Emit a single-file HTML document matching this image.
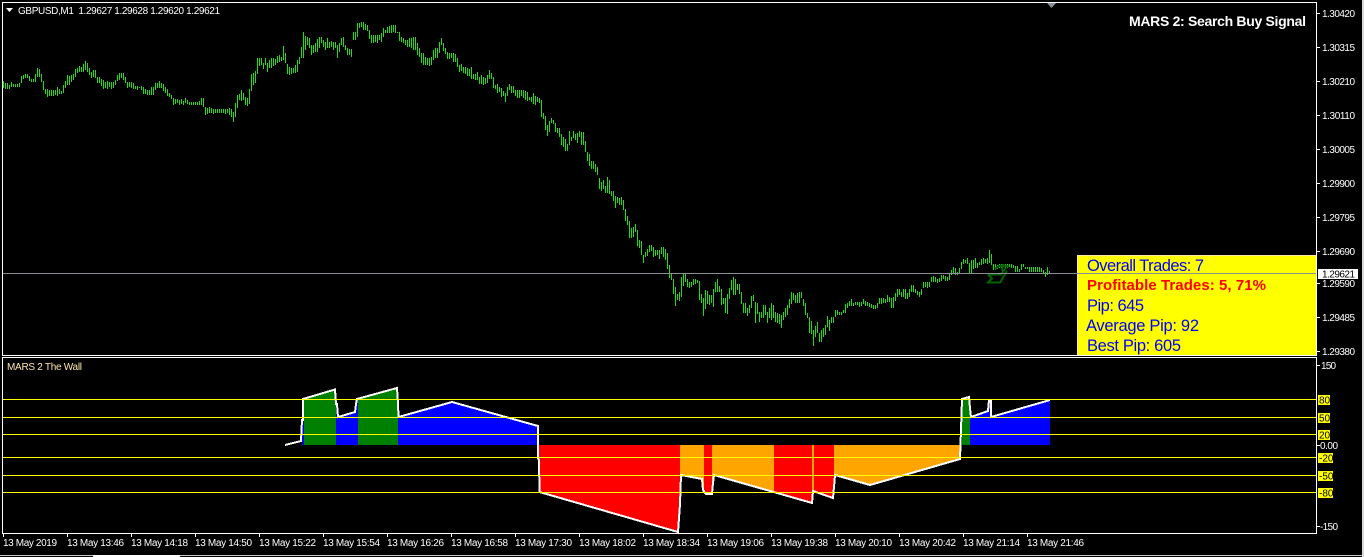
<!DOCTYPE html>
<html lang="en">
<head>
<meta charset="utf-8">
<title>GBPUSD,M1 MARS 2</title>
<style>
html,body{margin:0;padding:0;background:#000;width:1364px;height:557px;overflow:hidden}
svg{display:block;position:absolute;left:0;top:0}
text{font-family:"Liberation Sans",Arial,sans-serif;fill:#fff}
.a{font-size:10px}
.k{font-size:10px;fill:#000}
.p{font-size:16.5px;fill:#0000ff}
</style>
</head>
<body>
<svg width="1364" height="557" viewBox="0 0 1364 557" xmlns="http://www.w3.org/2000/svg">
<defs>
<clipPath id="area"><polygon points="285,445 301,441 302,420 303,420 303,399 335,389.5 336,404 337,404 338,417 355,412 356,404 357,399 397,388 398,403 398.5,417 452,402 538,426 538,445 539,445 539,460 539.5,492 678,532 680,504 681,475 702,479 703,490 706,494 712,494 713,483 714,475 812,503 813,491 833,498 834,487 835,475 870,485 960,459 961,445 962,445 962,399 969,397 970,408 971,417 988,411 989,400 991,400 991,417 1050,400 1050,445"/></clipPath>
</defs>
<rect width="1364" height="557" fill="#000"/>

<!-- price bars -->
<path transform="translate(.5 0)" fill="none" stroke="#22dd11" stroke-width="1" shape-rendering="crispEdges" d="M3 81V88M5 83V89M7 83V89M9 85V89M11 82V87M13 84V87M15 84V87M17 84V87M19 83V87M21 76V83M23 75V79M25 74V78M27 74V78M29 76V81M31 79V82M33 79V82M35 74V82M37 68V77M39 69V77M41 74V82M43 81V90M45 89V94M47 89V97M49 90V96M51 90V96M53 90V96M55 90V95M57 87V96M59 89V94M61 91V94M63 85V93M65 81V88M67 75V85M69 76V85M71 75V82M73 74V80M75 69V77M77 68V73M79 66V72M81 67V72M83 64V72M85 61V70M87 63V72M89 68V75M91 72V78M93 70V77M95 70V78M97 77V83M99 77V83M101 79V86M103 80V89M105 82V88M107 81V89M109 82V87M111 82V89M113 82V88M115 80V85M117 75V81M119 73V80M121 73V78M123 73V80M125 77V83M127 82V88M129 82V87M131 82V88M133 83V89M135 86V89M137 86V90M139 87V88M141 86V90M143 87V94M145 89V94M147 90V95M149 90V95M151 87V95M153 87V95M155 83V90M157 83V88M159 81V88M161 83V88M163 84V91M165 87V93M167 89V96M169 93V97M171 95V99M173 98V105M175 99V104M177 99V103M179 100V105M181 99V104M183 101V105M185 98V103M187 100V104M189 102V105M191 102V105M193 102V105M195 102V105M197 102V105M199 101V105M201 98V105M203 98V107M205 107V115M207 108V114M209 107V113M211 108V113M213 109V114M215 109V113M217 109V113M219 109V113M221 109V113M223 109V113M225 109V114M227 109V113M229 108V115M231 109V117M233 112V122M235 103V117M237 95V108M239 94V100M241 90V101M243 93V100M245 97V105M247 98V106M249 89V104M251 74V91M253 73V85M255 71V83M257 58V74M259 58V66M261 58V65M263 63V69M265 58V65M267 63V72M269 60V68M271 58V68M273 58V66M275 59V65M277 56V63M279 55V62M281 57V61M283 46V60M285 53V63M287 64V74M289 67V75M291 68V74M293 68V73M295 65V73M297 60V72M299 57V64M301 47V58M303 32V58M305 36V50M307 37V45M309 38V48M311 45V55M313 45V53M315 43V52M317 39V52M319 37V48M321 37V43M323 40V47M325 42V50M327 38V48M329 42V48M331 41V47M333 42V50M335 42V48M337 45V58M339 43V52M341 38V45M343 37V47M345 45V50M347 48V55M349 49V55M351 49V57M353 32V40M355 32V40M357 23V37M359 23V28M361 22V27M363 22V30M365 24V30M367 25V31M369 30V39M371 35V43M373 35V43M375 35V42M377 35V43M379 35V40M381 33V42M383 28V37M385 30V33M387 27V33M389 26V33M391 25V33M393 25V32M395 25V33M397 32V33M399 32V41M401 37V42M403 38V43M405 40V45M407 40V47M409 38V47M411 38V48M413 37V50M415 37V50M417 43V55M419 48V57M421 53V63M423 53V65M425 57V65M427 58V65M429 58V66M431 57V65M433 50V60M435 48V58M437 48V58M439 42V53M441 38V45M443 43V51M445 48V54M447 52V59M449 53V59M451 53V58M453 53V62M455 54V62M457 58V67M459 65V72M461 64V71M463 67V73M465 67V74M467 68V76M469 69V76M471 67V79M473 74V79M475 74V80M477 72V80M479 77V84M481 75V84M483 77V85M485 78V84M487 75V83M489 70V79M491 73V79M493 77V88M495 85V89M497 84V93M499 87V92M501 88V97M503 91V96M505 93V102M507 87V96M509 84V90M511 86V93M513 86V93M515 90V96M517 90V98M519 90V98M521 90V96M523 90V98M525 91V100M527 92V101M529 97V100M531 97V102M533 93V104M535 96V105M537 97V102M539 98V103M541 100V117M543 113V119M545 116V130M547 125V136M549 121V132M551 118V123M553 120V124M555 123V132M557 128V133M559 128V137M561 134V145M563 137V147M565 139V151M567 144V151M569 131V145M571 137V141M573 131V138M575 134V140M577 133V143M579 131V137M581 132V145M583 132V145M585 141V152M587 152V161M589 154V166M591 161V169M593 161V169M595 164V172M597 167V175M599 178V189M601 182V191M603 180V189M605 186V193M607 177V193M609 180V194M611 191V196M613 191V201M615 196V208M617 197V203M619 198V205M621 197V205M623 200V210M625 209V221M627 216V225M629 221V238M631 228V238M633 227V237M635 224V232M637 230V246M639 240V248M641 241V255M643 255V263M645 252V257M647 249V256M649 245V252M651 245V251M653 247V257M655 250V256M657 250V255M659 250V259M661 247V254M663 247V257M665 249V260M667 253V269M669 265V278M671 273V280M673 279V294M675 287V306M677 294V300M679 292V301M681 277V297M683 273V286M685 273V282M687 279V287M689 282V288M691 282V287M693 279V285M695 279V284M697 280V283M699 281V300M701 294V303M703 298V316M705 290V309M707 291V304M709 295V305M711 295V303M713 289V307M715 282V292M717 279V292M719 286V292M721 289V305M723 298V304M725 298V313M727 294V314M729 288V299M731 280V290M733 277V295M735 279V295M737 284V290M739 284V294M741 292V304M743 303V313M745 303V313M747 308V316M749 305V313M751 296V308M753 295V301M755 302V323M757 303V314M759 312V322M761 312V318M763 305V318M765 305V315M767 312V323M769 308V318M771 303V320M773 305V318M775 312V322M777 313V323M779 314V324M781 315V328M783 312V320M785 308V317M787 305V315M789 299V308M791 292V304M793 293V300M795 295V303M797 293V303M799 292V303M801 292V298M803 299V306M805 303V315M807 313V318M809 317V333M811 321V334M813 330V346M815 326V337M817 322V333M819 333V342M821 330V342M823 328V337M825 325V335M827 316V327M829 320V331M831 317V323M833 317V323M835 310V317M837 310V315M839 312V315M841 312V315M843 310V313M845 304V313M847 303V308M849 301V306M851 299V306M853 303V306M855 302V305M857 302V305M859 302V307M861 302V306M863 299V304M865 301V306M867 302V306M869 303V307M871 304V308M873 305V309M875 305V309M877 303V308M879 298V304M881 298V304M883 298V303M885 299V303M887 295V302M889 297V302M891 298V308M893 297V308M895 293V301M897 289V297M899 289V295M901 292V297M903 289V297M905 289V299M907 293V299M909 289V297M911 285V292M913 285V292M915 289V293M917 291V295M919 292V297M921 289V295M923 282V288M925 282V287M927 282V288M929 282V287M931 277V282M933 276V282M935 277V282M937 279V283M939 278V282M941 275V281M943 275V279M945 276V281M947 277V281M949 273V280M951 270V275M953 267V273M955 268V275M957 272V275M959 268V273M961 262V269M963 259V264M965 260V263M967 258V264M969 263V273M971 260V273M973 260V269M975 258V268M977 263V268M979 262V265M981 259V265M983 258V264M985 259V263M987 258V264M989 250V263M991 254V265M993 264V270M995 264V270M997 265V269M999 264V268M1001 264V268M1003 264V267M1005 264V268M1007 264V268M1009 264V267M1011 264V268M1013 265V268M1015 266V272M1017 266V272M1019 269V272M1021 264V270M1023 264V267M1025 267V269M1027 267V269M1029 267V272M1031 267V272M1033 267V272M1035 267V272M1037 267V272M1039 267V272M1041 268V272M1043 270V274M1045 272V277M1047 267V275M1049 271V273"/>

<!-- arrow -->
<path d="M988 274.5H1001L1006 268M988 274.5L992 278.5L988 282.5H1000L1007 271M995 269Q1001 263 1009 267M1003 264L1002 271" fill="none" stroke="#006400" stroke-width="2"/>

<!-- info panel -->
<rect x="1077" y="255" width="239" height="100" fill="#ffff00"/>
<rect x="1077" y="255" width="239" height="1" fill="#ffe9a0"/>
<rect x="1077" y="255" width="1" height="100" fill="#ffe9a0"/>
<text class="p" x="1087" y="271" textLength="117">Overall Trades: 7</text>
<text x="1087" y="290" font-size="15" font-weight="700" style="fill:#ff0000" textLength="179">Profitable Trades: 5, 71%</text>
<text class="p" x="1087" y="311" textLength="57">Pip: 645</text>
<text class="p" x="1086" y="331" textLength="113">Average Pip: 92</text>
<text class="p" x="1087" y="351" textLength="94">Best Pip: 605</text>

<!-- current price line -->
<rect x="3" y="273" width="1313" height="1" fill="#8a8f96"/>

<!-- frames -->
<g fill="#fff" shape-rendering="crispEdges">
<rect x="2" y="2" width="1315" height="1"/>
<rect x="2" y="2" width="1" height="354"/>
<rect x="1316" y="2" width="1" height="354"/>
<rect x="2" y="355" width="1315" height="1"/>
<rect x="2" y="357" width="1315" height="1"/>
<rect x="2" y="357" width="1" height="177"/>
<rect x="1316" y="357" width="1" height="177"/>
<rect x="2" y="533" width="1315" height="1"/>
<!-- price ticks -->
<rect x="1317" y="13" width="3" height="1"/><rect x="1317" y="47" width="3" height="1"/><rect x="1317" y="81" width="3" height="1"/><rect x="1317" y="115" width="3" height="1"/><rect x="1317" y="149" width="3" height="1"/><rect x="1317" y="183" width="3" height="1"/><rect x="1317" y="217" width="3" height="1"/><rect x="1317" y="251" width="3" height="1"/><rect x="1317" y="283" width="3" height="1"/><rect x="1317" y="317" width="3" height="1"/><rect x="1317" y="351" width="3" height="1"/><rect x="1317" y="365" width="3" height="1"/><rect x="1317" y="445" width="3" height="1"/><rect x="1317" y="526" width="3" height="1"/>
<!-- time ticks -->
<rect x="3" y="534" width="1" height="3"/><rect x="67" y="534" width="1" height="3"/><rect x="131" y="534" width="1" height="3"/><rect x="195" y="534" width="1" height="3"/><rect x="259" y="534" width="1" height="3"/><rect x="323" y="534" width="1" height="3"/><rect x="387" y="534" width="1" height="3"/><rect x="451" y="534" width="1" height="3"/><rect x="515" y="534" width="1" height="3"/><rect x="579" y="534" width="1" height="3"/><rect x="643" y="534" width="1" height="3"/><rect x="707" y="534" width="1" height="3"/><rect x="771" y="534" width="1" height="3"/><rect x="835" y="534" width="1" height="3"/><rect x="899" y="534" width="1" height="3"/><rect x="963" y="534" width="1" height="3"/><rect x="1027" y="534" width="1" height="3"/>
</g>

<!-- title -->
<polygon points="6,8 13,8 9.5,12" fill="#fff"/>
<text class="a" x="18" y="14" textLength="202" xml:space="preserve">GBPUSD,M1  1.29627 1.29628 1.29620 1.29621</text>
<polygon points="1047,3 1056,3 1051.5,8" fill="#8a9099"/>
<text x="1129" y="26" font-size="14" font-weight="700" textLength="177">MARS 2: Search Buy Signal</text>

<!-- price labels -->
<g class="a">
<text class="a" x="1322" y="17" textLength="33">1.30420</text>
<text class="a" x="1322" y="51" textLength="33">1.30315</text>
<text class="a" x="1322" y="85" textLength="33">1.30210</text>
<text class="a" x="1322" y="119" textLength="33">1.30110</text>
<text class="a" x="1322" y="153" textLength="33">1.30005</text>
<text class="a" x="1322" y="187" textLength="33">1.29900</text>
<text class="a" x="1322" y="221" textLength="33">1.29795</text>
<text class="a" x="1322" y="255" textLength="33">1.29690</text>
<text class="a" x="1322" y="287" textLength="33">1.29590</text>
<text class="a" x="1322" y="321" textLength="33">1.29485</text>
<text class="a" x="1322" y="355" textLength="33">1.29380</text>
</g>
<rect x="1318" y="269" width="40" height="10" fill="#fff"/>
<text class="k" x="1322" y="277.5" textLength="33">1.29621</text>

<!-- indicator window -->
<text class="a" x="7" y="370" textLength="75" style="fill:#ffe6a8">MARS 2 The Wall</text>
<g clip-path="url(#area)" shape-rendering="crispEdges">
<rect x="302" y="380" width="236" height="66" fill="#0000ff"/>
<rect x="304" y="380" width="32" height="66" fill="#008000"/>
<rect x="358" y="380" width="40" height="66" fill="#008000"/>
<rect x="539" y="445" width="141" height="90" fill="#ff0000"/>
<rect x="680" y="445" width="24" height="90" fill="#ffa500"/>
<rect x="704" y="445" width="8" height="90" fill="#ff0000"/>
<rect x="712" y="445" width="62" height="90" fill="#ffa500"/>
<rect x="774" y="445" width="38" height="90" fill="#ff0000"/>
<rect x="812" y="445" width="2" height="90" fill="#ffa500"/>
<rect x="814" y="445" width="20" height="90" fill="#ff0000"/>
<rect x="834" y="445" width="128" height="90" fill="#ffa500"/>
<rect x="962" y="380" width="8" height="66" fill="#008000"/>
<rect x="970" y="380" width="80" height="66" fill="#0000ff"/>
</g>
<polyline fill="none" stroke="#fff" stroke-width="2" shape-rendering="crispEdges" points="285,445 301,441 302,420 303,420 303,399 335,389.5 336,404 337,404 338,417 355,412 356,404 357,399 397,388 398,403 398.5,417 452,402 538,426 538,458 539,460 539.5,492 678,532 680,504 681,475 702,479 703,490 706,494 712,494 713,483 714,475 812,503 813,491 833,498 834,487 835,475 870,485 960,459 961,430 962,399 969,397 970,408 971,417 988,411 989,400 991,400 991,417 1050,400"/>
<g fill="#ffff00" shape-rendering="crispEdges">
<rect x="3" y="399" width="1313" height="1"/>
<rect x="3" y="417" width="1313" height="1"/>
<rect x="3" y="434" width="1313" height="1"/>
<rect x="3" y="457" width="1313" height="1"/>
<rect x="3" y="475" width="1313" height="1"/>
<rect x="3" y="492" width="1313" height="1"/>
<rect x="1318" y="395" width="12" height="10"/>
<rect x="1318" y="413" width="12" height="10"/>
<rect x="1318" y="430" width="12" height="10"/>
<rect x="1318" y="453" width="15" height="10"/>
<rect x="1318" y="471" width="15" height="10"/>
<rect x="1318" y="488" width="15" height="10"/>
</g>
<text class="k" x="1319" y="403.5">80</text>
<text class="k" x="1319" y="421.5">50</text>
<text class="k" x="1319" y="438.5">20</text>
<text class="k" x="1319" y="461.5">-20</text>
<text class="k" x="1319" y="479.5">-50</text>
<text class="k" x="1319" y="496.5">-80</text>
<text class="a" x="1321" y="369" textLength="15">150</text>
<text class="a" x="1320" y="449" textLength="18">0.00</text>
<text class="a" x="1320" y="530" textLength="18">-150</text>

<!-- time labels -->
<text class="a" x="3" y="546" textLength="54">13 May 2019</text>
<text class="a" x="67" y="546" textLength="57">13 May 13:46</text>
<text class="a" x="131" y="546" textLength="57">13 May 14:18</text>
<text class="a" x="195" y="546" textLength="57">13 May 14:50</text>
<text class="a" x="259" y="546" textLength="57">13 May 15:22</text>
<text class="a" x="323" y="546" textLength="57">13 May 15:54</text>
<text class="a" x="387" y="546" textLength="57">13 May 16:26</text>
<text class="a" x="451" y="546" textLength="57">13 May 16:58</text>
<text class="a" x="515" y="546" textLength="57">13 May 17:30</text>
<text class="a" x="579" y="546" textLength="57">13 May 18:02</text>
<text class="a" x="643" y="546" textLength="57">13 May 18:34</text>
<text class="a" x="707" y="546" textLength="57">13 May 19:06</text>
<text class="a" x="771" y="546" textLength="57">13 May 19:38</text>
<text class="a" x="835" y="546" textLength="57">13 May 20:10</text>
<text class="a" x="899" y="546" textLength="57">13 May 20:42</text>
<text class="a" x="963" y="546" textLength="57">13 May 21:14</text>
<text class="a" x="1027" y="546" textLength="57">13 May 21:46</text>

<!-- window edges -->
<rect x="0" y="555" width="1364" height="1" fill="#c8c8c8"/>
<rect x="93" y="555" width="87" height="2" fill="#fff"/>
<rect x="1362" y="0" width="2" height="557" fill="#d8d8d8"/>
</svg>
</body>
</html>
